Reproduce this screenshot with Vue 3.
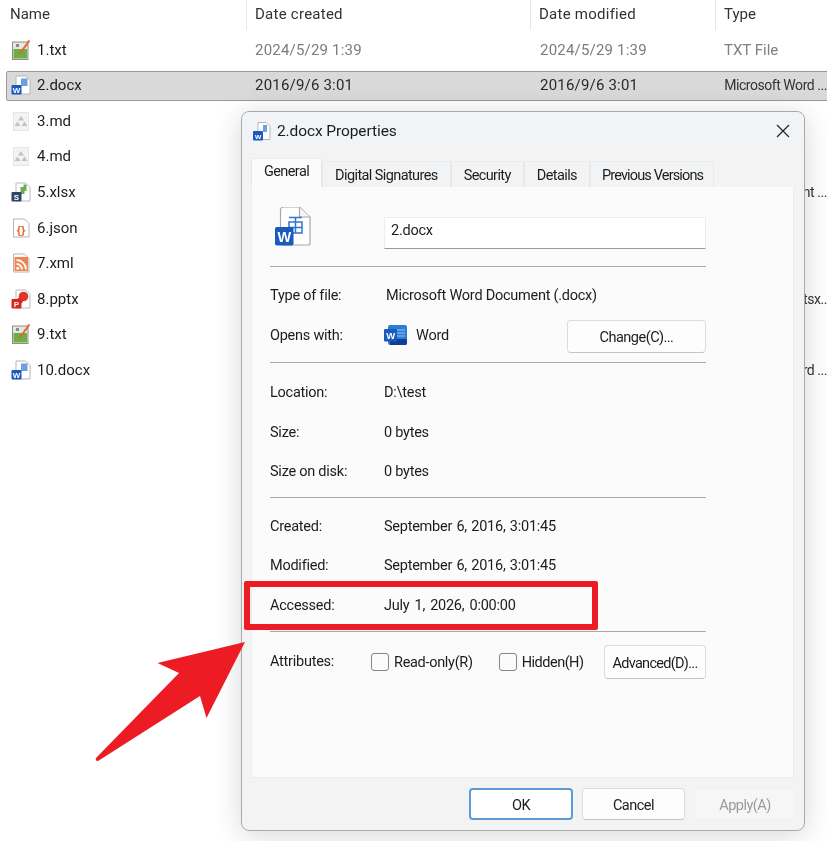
<script setup>
const files = [
  { name: '1.txt', kind: 'txt', created: '2024/5/29 1:39', modified: '2024/5/29 1:39', type: 'TXT File' },
  { name: '2.docx', kind: 'word', created: '2016/9/6 3:01', modified: '2016/9/6 3:01', type: 'Microsoft Word ...', selected: true },
  { name: '3.md', kind: 'md' },
  { name: '4.md', kind: 'md' },
  { name: '5.xlsx', kind: 'xlsx', type: 'nt ...' },
  { name: '6.json', kind: 'json' },
  { name: '7.xml', kind: 'xml' },
  { name: '8.pptx', kind: 'pptx', type: 'tsx..' },
  { name: '9.txt', kind: 'txt' },
  { name: '10.docx', kind: 'word', type: 'Microsoft Word ...' }
]
const tabs = ['Digital Signatures', 'Security', 'Details', 'Previous Versions']
</script>

<template>
  <div class="page">
    <section class="explorer">
      <header class="head">
        <span class="col col-name">Name</span>
        <span class="col col-created">Date created</span>
        <span class="col col-modified">Date modified</span>
        <span class="col col-type">Type</span>
      </header>
      <div v-for="f in files" :key="f.name" class="file" :class="{ selected: f.selected }">
        <svg class="ficon" viewBox="0 0 20 20">
          <template v-if="f.kind === 'txt'">
            <rect x="1.500" y="2" width="15.500" height="17.500" fill="#e6e6e2" stroke="#8d8d88" stroke-width="1" />
            <rect x="2.500" y="9" width="13.500" height="9.500" fill="#6fae45" />
            <rect x="5" y="4" width="3" height="3" fill="#8a8a86" />
            <path d="M8.500 14 L18.500 0.500" stroke="#e8662c" stroke-width="2" />
          </template>
          <template v-else-if="f.kind === 'word'">
            <path d="M5 1h9.500l4.500 4.500V19H5z" fill="#fff" stroke="#b5b5b5" />
            <rect x="10" y="3.500" width="6.500" height="7.500" fill="#6f9fe0" />
            <rect x="0.500" y="10" width="10" height="9.500" rx="1" fill="#185abd" />
            <text x="5.500" y="18" class="glyph" font-size="8">W</text>
          </template>
          <template v-else-if="f.kind === 'md'">
            <rect x="2.500" y="1.500" width="15" height="18" fill="#f3f3f3" stroke="#e6e6e6" />
            <path d="M10 5l3 4.500H7zM6.500 10.500l3 4.500h-6zM13.500 10.500l3 4.500h-6z" fill="#c2c2c2" />
          </template>
          <template v-else-if="f.kind === 'xlsx'">
            <path d="M5 1h9.500l4.500 4.500V19H5z" fill="#fff" stroke="#bbb" />
            <path d="M9.500 5h3V2.500h3V9h-2v3h-4z" fill="#6dac4f" />
            <rect x="0.500" y="10" width="10" height="9.500" rx="1" fill="#2e4666" />
            <text x="5.500" y="18" class="glyph" font-size="8">S</text>
          </template>
          <template v-else-if="f.kind === 'json'">
            <path d="M2.500 1h11l4.500 4.500V19H2.500z" fill="#fff" stroke="#b5b5b5" />
            <text x="10" y="15.500" class="glyph orange" font-size="11">{}</text>
          </template>
          <template v-else-if="f.kind === 'xml'">
            <path d="M2.500 1h11l4.500 4.500V19H2.500z" fill="#fff" stroke="#b5b5b5" />
            <rect x="3.500" y="4" width="13.500" height="14" fill="#f5814e" />
            <path d="M5.500 7a9.500 9.500 0 0 1 9.500 9.500M5.500 11a5.500 5.500 0 0 1 5.500 5.500" fill="none" stroke="#fff" stroke-width="1.800" />
            <circle cx="6.800" cy="15.200" r="1.500" fill="#fff" />
          </template>
          <template v-else>
            <path d="M5 1h9.500l4.500 4.500V19H5z" fill="#fff" stroke="#bbb" />
            <circle cx="12.500" cy="7.500" r="4.800" fill="#e0362c" />
            <circle cx="9" cy="11.500" r="3" fill="#e0362c" />
            <rect x="0.500" y="10" width="10" height="9.500" rx="1" fill="#d8261c" />
            <text x="5.500" y="18" class="glyph" font-size="8">P</text>
          </template>
        </svg>
        <span class="fname">{{ f.name }}</span>
        <span v-if="f.created" class="fdate fd1" :class="{ dark: f.selected }">{{ f.created }}</span>
        <span v-if="f.modified" class="fdate fd2" :class="{ dark: f.selected }">{{ f.modified }}</span>
        <span v-if="f.type" class="ftype" :class="{ txt: f.kind === 'txt' }">{{ f.type }}</span>
      </div>
    </section>

    <div class="dialog">
      <div class="titlebar">
        <svg class="ticon" viewBox="0 0 20 20">
          <path d="M6 1.500h8l4 4v13H6z" fill="#fff" stroke="#b5b5b5" />
          <rect x="11" y="4" width="4" height="7" fill="#6f9fe0" />
          <rect x="1" y="10" width="10" height="9.500" rx="1" fill="#185abd" />
          <text x="6" y="18" class="glyph" font-size="8">w</text>
        </svg>
        <span class="ttext">2.docx Properties</span>
        <svg class="close" viewBox="0 0 14 14"><path d="M1 1l12 12M13 1L1 13" stroke="#222" stroke-width="1.200" fill="none" /></svg>
      </div>

      <div class="tabs">
        <span class="tab active">General</span>
        <span v-for="t in tabs" :key="t" class="tab">{{ t }}</span>
      </div>

      <div class="panel">
        <div class="top">
          <svg class="bigicon" viewBox="0 0 38 40">
            <path d="M6.500 3a3 3 0 0 1 3-3h16L36 10v26a2 2 0 0 1-2 2H9.500a3 3 0 0 1-3-3z" fill="#fff" stroke="#a8a8a8" stroke-width="1.200" />
            <path d="M25.500 0v10H36" fill="#f4f4f4" stroke="#a8a8a8" stroke-width="1.200" />
            <path d="M15 10.500h13M15 15h13v11H15zM15 20.500h13M21.500 10.500v15.500" fill="none" stroke="#2f75cf" stroke-width="1.500" />
            <rect x="1" y="20" width="18.500" height="18.500" rx="1.800" fill="#185abd" />
            <text x="10.200" y="35" class="glyph" font-size="14.500">W</text>
          </svg>
          <div class="input">2.docx</div>
        </div>
        <hr class="sep s1" />

        <div class="group g1">
          <div class="row"><span class="label">Type of file:</span><span class="value v2">Microsoft Word Document (.docx)</span></div>
          <div class="row">
            <span class="label">Opens with:</span>
            <svg class="wicon" viewBox="0 0 23 22">
              <rect x="4" y="1" width="19" height="20" rx="2" fill="#2b7cd3" />
              <path d="M8 6h13M8 9h13M8 12h13" stroke="#9cc4ef" stroke-width="1" />
              <path d="M6 15h17v4a2 2 0 0 1-2 2H6z" fill="#103f91" />
              <rect x="0" y="5" width="13" height="12.500" rx="1" fill="#185abd" />
              <text x="6.500" y="15" class="glyph" font-size="9.500">W</text>
            </svg>
            <span class="value">Word</span>
            <button class="btn change"><span class="btext">Change(C)...</span></button>
          </div>
        </div>
        <hr class="sep s2" />

        <div class="group g2">
          <div class="row wide"><span class="label">Location:</span><span class="value">D:\test</span></div>
          <div class="row wide"><span class="label">Size:</span><span class="value">0 bytes</span></div>
          <div class="row wide"><span class="label">Size on disk:</span><span class="value">0 bytes</span></div>
        </div>
        <hr class="sep s3" />

        <div class="group g3">
          <div class="row wide"><span class="label">Created:</span><span class="value date">September 6, 2016, 3:01:45</span></div>
          <div class="row wide"><span class="label">Modified:</span><span class="value date">September 6, 2016, 3:01:45</span></div>
          <div class="row wide"><span class="label">Accessed:</span><span class="value date short">July 1, 2026, 0:00:00</span></div>
        </div>
        <hr class="sep s4" />

        <div class="attrs">
          <span class="attr-label">Attributes:</span>
          <span class="check c1"></span><span class="ctext">Read-only(R)</span>
          <span class="check c2"></span><span class="ctext narrow">Hidden(H)</span>
          <button class="btn advanced"><span class="btext">Advanced(D)...</span></button>
        </div>
      </div>

      <div class="footer">
        <button class="btn fbtn ok"><span class="btext">OK</span></button>
        <button class="btn fbtn cancel"><span class="btext">Cancel</span></button>
        <button class="btn fbtn apply"><span class="btext">Apply(A)</span></button>
      </div>
    </div>

    <div class="highlight"></div>
    <svg class="arrow" viewBox="0 0 160 130">
      <path d="M151 3 L63.500 24 L85 34 L2 119 Q1 122 4 122 L106 57 L112.500 79 Z" fill="#ed1c24" />
    </svg>
  </div>
</template>

<style>
html, body { margin: 0; background: #fff; }
</style>

<style scoped>
.page {
  position: relative;
  width: 827px;
  height: 841px;
  overflow: hidden;
  background: #fff;
  color: #1c1c1c;
  font-family: Roboto, "Liberation Sans", sans-serif;
  font-size: 14.500px;
  filter: blur(0.35px);
}
.glyph { fill: #fff; font-family: "Liberation Sans", sans-serif; font-weight: 700; text-anchor: middle; }
.glyph.orange { fill: #e8662c; }

.explorer { display: flex; flex-direction: column; }
.head { height: 32px; flex: none; position: relative; font-size: 15px; color: #333; }
.col { position: absolute; top: 0; height: 32px; line-height: 29px; }
.col-name { left: 10px; }
.col-created { left: 255px; letter-spacing: 0.250px; }
.col-modified { left: 539px; letter-spacing: 0.250px; }
.col-type { left: 724px; }
.col-created::before, .col-modified::before, .col-type::before {
  content: "";
  position: absolute;
  left: -9px;
  top: 0;
  width: 1px;
  height: 30px;
  background: #e6e6e6;
}
.file {
  position: relative;
  display: flex;
  align-items: center;
  height: 35.550px;
  flex: none;
  padding-left: 11px;
  font-size: 15px;
}
.file.selected::before {
  content: "";
  position: absolute;
  left: 6px;
  right: -4px;
  top: 3px;
  height: 28px;
  background: #d9d9d9;
  border: 1px solid #9a9a9a;
  border-radius: 2px;
}
.ficon { position: relative; width: 20px; height: 20px; flex: none; }
.fname { position: relative; margin-left: 6px; }
.fdate { position: absolute; color: #7c7c7c; font-size: 15px; letter-spacing: 0.200px; }
.fdate.dark { color: #2a2a2a; }
.fd1 { left: 255px; }
.fd2 { left: 540px; }
.ftype { position: absolute; right: 0; font-size: 14px; letter-spacing: -0.450px; color: #333; }
.ftype.txt { left: 724px; right: auto; color: #808080; font-size: 15px; letter-spacing: 0; }

.dialog {
  position: absolute;
  left: 241px;
  top: 111px;
  width: 564px;
  height: 720px;
  box-sizing: border-box;
  display: flex;
  flex-direction: column;
  background: #f3f3f3;
  border: 1px solid #aaaaaa;
  border-radius: 8px;
  box-shadow: 0 4px 28px rgba(0, 0, 0, 0.16);
}
.titlebar {
  height: 37px;
  flex: none;
  display: flex;
  align-items: center;
  padding: 0 14px 0 10px;
  background: #f1f3f7;
  border-radius: 8px 8px 0 0;
}
.ticon { width: 20px; height: 20px; flex: none; }
.ttext { margin-left: 5px; font-size: 15.500px; letter-spacing: -0.100px; }
.close { width: 14px; height: 14px; margin-left: auto; }

.tabs { display: flex; align-items: flex-end; height: 38px; flex: none; padding-left: 9px; gap: 1px; letter-spacing: -0.600px; }
.tab {
  height: 25px;
  line-height: 27px;
  padding: 0 12px;
  background: #f2f3f4;
  border: 1px solid #e8e8e8;
  border-bottom: 0;
  border-top-color: #ececec;
  margin-right: -1px;
}
.tab:last-child { padding: 0 10px 0 11px; letter-spacing: -0.850px; }
.tab.active {
  height: 28px;
  line-height: 26px;
  background: #fbfbfb;
  position: relative;
}

.panel {
  margin: 0 10px 0 9px;
  height: 591px;
  flex: none;
  box-sizing: border-box;
  padding: 20px 87px 0 18px;
  background: #fbfbfb;
  border: 1px solid #ececec;
  border-top: 0;
  letter-spacing: -0.250px;
}
.top { display: flex; height: 42px; padding-left: 4px; }
.bigicon { width: 38px; height: 40px; flex: none; }
.input {
  margin: 10px 0 0 72px;
  flex: 1;
  height: 32px;
  line-height: 26px;
  box-sizing: border-box;
  padding-left: 6px;
  background: #fff;
  border: 1px solid #ededed;
  border-bottom-color: #9b9b9b;
}
.sep { margin: 0; border: 0; height: 1px; background: #a9a9a9; }
.s1 { margin-top: 17px; }
.s2 { margin-top: 7px; }
.s3 { margin-top: 5px; }
.s4 { margin-top: 6px; }
.g1 { margin-top: 8px; }
.g2 { margin-top: 10px; }
.g3 { margin-top: 9px; }
.row { display: flex; align-items: center; height: 40px; }
.row.wide { height: 39.500px; }
.label { width: 114px; flex: none; }
.value.v2 { margin-left: 2px; }
.date { word-spacing: 1px; }
.date.short { word-spacing: 1.800px; }
.wicon { width: 23px; height: 22px; flex: none; margin-right: 9px; }
.btn {
  font: inherit;
  color: #1c1c1c;
  background: #fdfdfd;
  border: 1px solid #dcdcdc;
  border-bottom-color: #c4c4c4;
  border-radius: 4px;
  padding: 2px 0 0;
  letter-spacing: -0.500px;
}
.btext { display: block; }
.change { margin-left: auto; width: 139px; height: 33px; position: relative; top: 1px; }
.attrs { display: flex; align-items: center; height: 34px; margin-top: 13px; }
.attr-label { width: 101px; flex: none; position: relative; top: -1px; }
.check {
  width: 16px;
  height: 16px;
  flex: none;
  background: #fbfbfb;
  border: 1px solid #858585;
  border-radius: 3px;
}
.ctext { margin-left: 5px; letter-spacing: -0.300px; }
.ctext.narrow { letter-spacing: -0.500px; }
.c2 { margin-left: 26px; }
.advanced { margin-left: auto; width: 102px; height: 34px; white-space: nowrap; letter-spacing: -0.700px; }

.footer { display: flex; justify-content: flex-end; gap: 9px; padding: 10px 8px 0 0; }
.fbtn { height: 32px; flex: none; width: 103px; }
.ok { width: 104px; border: 2px solid #5a9bd8; border-radius: 4px; background: #fff; }
.apply { width: 102px; color: #9a9a9a; background: #f6f6f6; border-color: #f0f0f0; }

.highlight {
  position: absolute;
  left: 244px;
  top: 581px;
  width: 354px;
  height: 49px;
  box-sizing: border-box;
  border: 6px solid #ed1c24;
  border-radius: 2px;
}
.arrow { position: absolute; left: 94px; top: 639px; width: 160px; height: 130px; }
</style>
